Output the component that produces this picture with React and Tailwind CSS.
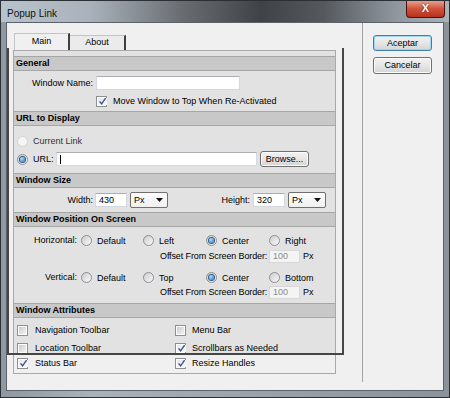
import React from "react";

function Check({ checked }) {
  return (
    <span className="w-[11px] h-[11px] shrink-0 border border-[#8e8f8f] bg-white p-[1px] flex">
      <span
        className={
          checked
            ? "flex-1 bg-gradient-to-br from-[#e6e8ea] to-[#fbfbfb] flex items-center justify-center"
            : "flex-1 bg-gradient-to-br from-[#c9ccd1] to-[#f3f3f3] flex items-center justify-center"
        }
      >
        {checked && (
          <svg width="9" height="9" viewBox="0 0 9 9">
            <path d="M1.6 4.4 L3.6 6.9 L7.6 1.2" fill="none" stroke="#3e4f93" strokeWidth="1.4" />
          </svg>
        )}
      </span>
    </span>
  );
}

function Radio({ checked, disabled }) {
  return (
    <span
      className={
        disabled
          ? "w-[11px] h-[11px] shrink-0 rounded-full border border-[#d2d2d2] bg-[#f5f5f5] flex items-center justify-center"
          : "w-[11px] h-[11px] shrink-0 rounded-full border border-[#8e8f8f] bg-gradient-to-br from-[#c9ccd1] to-[#fafafa] flex items-center justify-center"
      }
    >
      {checked && (
        <span className="w-[5px] h-[5px] rounded-full bg-[radial-gradient(circle_at_35%_35%,#b3e2ff,#1d5fae)] ring-1 ring-[#2d5c8f]" />
      )}
    </span>
  );
}

function Header({ children }) {
  return (
    <div className="h-[15px] shrink-0 border-y border-[#a6a6a6] bg-[#c8c8c8] flex items-center pl-[2px] font-bold leading-none">
      {children}
    </div>
  );
}

function Select() {
  return (
    <span className="w-[38px] h-[16px] shrink-0 border border-[#707070] rounded-[2px] bg-gradient-to-b from-[#fdfdfd] to-[#f0f0f0] flex items-center pl-[3px] pr-[4px]">
      <span className="leading-none">Px</span>
      <svg className="ml-auto" width="7" height="4" viewBox="0 0 7 4">
        <path d="M0 0 H7 L3.5 4 Z" fill="#111" />
      </svg>
    </span>
  );
}

function Btn({ children, primary, className }) {
  return (
    <div
      className={
        (primary
          ? "border-[#3c7fb1] shadow-[inset_0_0_0_1px_#9fd6f5] "
          : "border-[#707070] shadow-[inset_0_0_0_1px_#fcfcfc] ") +
        "border rounded-[3px] bg-gradient-to-b from-[#f2f2f2] via-[#e6e6e6] to-[#d4d4d4] flex items-center justify-center leading-none " +
        className
      }
    >
      {children}
    </div>
  );
}

function Offset({ mt }) {
  return (
    <div className={mt + " h-[13px] flex items-center ml-[146px]"}>
      <span className="w-[109px] leading-none whitespace-nowrap tracking-[-0.12px]">Offset From Screen Border:</span>
      <span className="w-[31px] h-[13px] bg-[#f4f4f4] border border-[#d8d8d8] flex items-center pl-[3px] leading-none text-[#8a8a8a]">100</span>
      <span className="ml-[3px] leading-none">Px</span>
    </div>
  );
}

export default function App() {
  return (
    <div className="w-[450px] h-[398px] flex flex-col bg-[linear-gradient(90deg,#8f979f,#a9b1b9_20%,#9aa1a8_60%,#8b9299)] border border-[#2c2f33] font-[family-name:Liberation_Sans,Arial,sans-serif] text-[9px] text-black overflow-hidden">
      {/* title bar */}
      <div className="h-[21px] shrink-0 flex items-start bg-[linear-gradient(90deg,#b9c3cc_0%,#a9b2bb_20%,#6a6e73_40%,#3f4246_58%,#55595e_72%,#8f969d_88%,#aab2ba_100%)]">
        <span className="ml-[6px] mt-[7px] text-[10px] leading-[12px] text-[#111]">Popup Link</span>
        <div className="ml-auto mr-[4px] -mt-[1px] w-[39px] h-[18px] border border-[#4a130b] border-t-0 rounded-b-[4px] bg-gradient-to-b from-[#e9a996] via-[#d0553d] to-[#b8301b] flex items-center justify-center">
          <span className="text-white font-bold text-[11px] leading-none [text-shadow:0_0_2px_#5a0d00]">X</span>
        </div>
      </div>

      {/* client area */}
      <div className="flex-1 mx-[5px] mb-[6px] border border-[#5b6269] bg-[#f0f0f0] relative flex">
        {/* left: tab control */}
        <div className="w-[355px] shrink-0 flex flex-col pl-[6px]">
          <div className="mt-[10px] h-[17px] flex items-end ml-[1px]">
            <div className="w-[56px] h-[17px] border-t border-l border-[#c4c4c4] border-r-2 border-r-[#3f3f3f] bg-[#f0f0f0] flex items-center justify-center">
              Main
            </div>
            <div className="w-[56px] h-[15px] border-t border-[#c4c4c4] border-r-2 border-r-[#3f3f3f] bg-[#ebebeb] flex items-center justify-center">
              About
            </div>
          </div>

          <div className="w-[323px] h-[324px] border border-[#a9a9a9] bg-[#e2e2e2] flex flex-col pt-[5px]">
            <Header>General</Header>
            <div className="h-[40px] shrink-0 flex flex-col">
              <div className="mt-[5px] h-[14px] flex items-center">
                <span className="w-[79px] text-right leading-none">Window Name:</span>
                <span className="ml-[3px] w-[144px] h-[14px] bg-white border border-[#d5d8de] border-t-[#abadb3]" />
              </div>
              <div className="mt-[5px] h-[12px] flex items-center ml-[82px]">
                <Check checked />
                <span className="ml-[6px] leading-none">Move Window to Top When Re-Activated</span>
              </div>
            </div>

            <Header>URL to Display</Header>
            <div className="h-[47px] shrink-0 flex flex-col">
              <div className="mt-[9px] h-[12px] flex items-center ml-[3px]">
                <Radio disabled />
                <span className="ml-[5px] leading-none text-[#333]">Current Link</span>
              </div>
              <div className="mt-[4px] h-[16px] flex items-center ml-[3px]">
                <Radio checked />
                <span className="ml-[5px] w-[23px] leading-none">URL:</span>
                <span className="w-[201px] h-[14px] bg-white border border-[#d5d8de] border-t-[#abadb3] flex items-center pl-[3px]">
                  <span className="w-[1px] h-[9px] bg-black" />
                </span>
                <Btn className="ml-[3px] w-[49px] h-[16px]">Browse...</Btn>
              </div>
            </div>

            <Header>Window Size</Header>
            <div className="h-[24px] shrink-0 flex flex-col">
              <div className="mt-[4px] h-[16px] flex items-center">
                <span className="w-[79px] text-right leading-none">Width:</span>
                <span className="ml-[2px] w-[32px] h-[14px] bg-white border border-[#d5d8de] border-t-[#abadb3] flex items-center pl-[3px] leading-none">430</span>
                <span className="ml-[3px]"><Select /></span>
                <span className="w-[82px] text-right leading-none">Height:</span>
                <span className="ml-[3px] w-[32px] h-[14px] bg-white border border-[#d5d8de] border-t-[#abadb3] flex items-center pl-[3px] leading-none">320</span>
                <span className="ml-[3px]"><Select /></span>
              </div>
            </div>

            <Header>Window Position On Screen</Header>
            <div className="h-[76px] shrink-0 flex flex-col">
              <div className="mt-[7px] h-[12px] flex items-center">
                <span className="w-[63px] text-right leading-none">Horizontal:</span>
                <span className="ml-[4px] w-[62px] flex items-center"><Radio /><span className="ml-[5px] leading-none mt-[3px]">Default</span></span>
                <span className="w-[63px] flex items-center"><Radio /><span className="ml-[5px] leading-none mt-[3px]">Left</span></span>
                <span className="w-[63px] flex items-center"><Radio checked /><span className="ml-[5px] leading-none mt-[3px]">Center</span></span>
                <span className="flex items-center"><Radio /><span className="ml-[5px] leading-none mt-[3px]">Right</span></span>
              </div>
              <Offset mt="mt-[4px]" />
              <div className="mt-[8px] h-[12px] flex items-center">
                <span className="w-[63px] text-right leading-none">Vertical:</span>
                <span className="ml-[4px] w-[62px] flex items-center"><Radio /><span className="ml-[5px] leading-none mt-[3px]">Default</span></span>
                <span className="w-[63px] flex items-center"><Radio /><span className="ml-[5px] leading-none mt-[3px]">Top</span></span>
                <span className="w-[63px] flex items-center"><Radio checked /><span className="ml-[5px] leading-none mt-[3px]">Center</span></span>
                <span className="flex items-center"><Radio /><span className="ml-[5px] leading-none mt-[3px]">Bottom</span></span>
              </div>
              <Offset mt="mt-[3px]" />
            </div>

            <Header>Window Attributes</Header>
            <div className="h-[55px] shrink-0 flex flex-col">
              <div className="mt-[6px] h-[12px] flex items-center ml-[3px]">
                <span className="w-[158px] flex items-center"><Check /><span className="ml-[7px] leading-none">Navigation Toolbar</span></span>
                <span className="flex items-center"><Check /><span className="ml-[6px] leading-none">Menu Bar</span></span>
              </div>
              <div className="mt-[6px] h-[12px] flex items-center ml-[3px]">
                <span className="w-[158px] flex items-center"><Check /><span className="ml-[7px] leading-none">Location Toolbar</span></span>
                <span className="flex items-center"><Check checked /><span className="ml-[6px] leading-none">Scrollbars as Needed</span></span>
              </div>
              <div className="h-[19px] flex items-center pl-[3px] bg-[#f0f0f0]">
                <span className="w-[158px] flex items-center"><Check checked /><span className="ml-[7px] leading-none">Status Bar</span></span>
                <span className="flex items-center"><Check checked /><span className="ml-[6px] leading-none">Resize Handles</span></span>
              </div>
            </div>
          </div>
        </div>

        {/* separator line */}
        <div className="w-[1px] h-[359px] shrink-0 bg-[#a3a3a3]" />

        {/* buttons */}
        <div className="ml-[10px] flex flex-col">
          <Btn primary className="mt-[12px] w-[59px] h-[16px]">Aceptar</Btn>
          <Btn className="mt-[6px] w-[59px] h-[17px]">Cancelar</Btn>
        </div>

        {/* dark clipping frame lying over the tab panel */}
        <div className="absolute left-0 top-[25px] w-[337px] h-[307px] border-x-2 border-b-2 border-[#464646] pointer-events-none" />
      </div>
    </div>
  );
}
